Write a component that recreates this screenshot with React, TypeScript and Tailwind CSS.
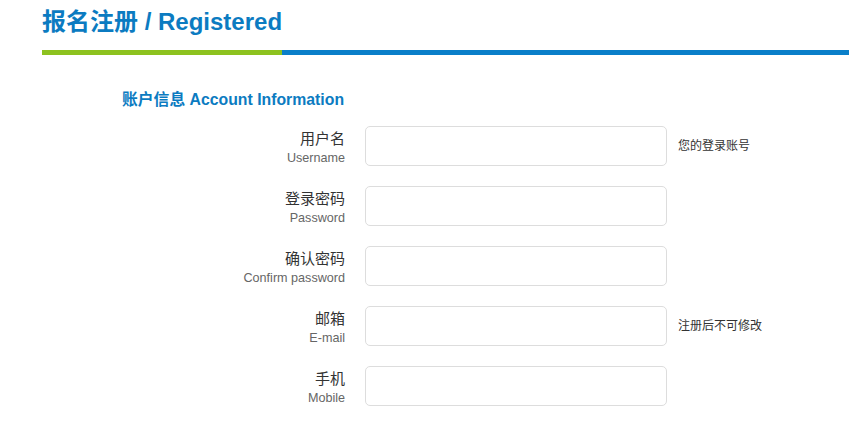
import React from 'react';

const font = { fontFamily: '"Liberation Sans", "Noto Sans CJK SC", sans-serif' };

type Field = { cn: string; en: string; hint?: string; type?: string };

const fields: Field[] = [
  { cn: '用户名', en: 'Username', hint: '您的登录账号' },
  { cn: '登录密码', en: 'Password', type: 'password' },
  { cn: '确认密码', en: 'Confirm password', type: 'password' },
  { cn: '邮箱', en: 'E-mail', hint: '注册后不可修改' },
  { cn: '手机', en: 'Mobile' },
];

const App: React.FC = () => {
  return (
    <div className="min-h-screen bg-white" style={font}>
      <div className="pl-[42px]">
        <h1 className="pt-[4px] text-[24px] font-bold leading-[36px] text-[#0b7bc1]">
          报名注册 / Registered
        </h1>
        <div className="mt-[10px] flex h-[5px]">
          <div className="w-[240px] bg-[#8dc21f]" />
          <div className="flex-1 bg-[#0a7fc9]" />
        </div>
      </div>

      <div className="mt-[35px]">
        <h2 className="pl-[122px] text-[15.8px] font-bold leading-[20px] text-[#0b7bc1]">
          账户信息 Account Information
        </h2>
        <div className="mt-[16px] flex flex-col gap-[20px]">
          {fields.map((f) => (
            <div key={f.en} className="flex items-center">
              <div className="w-[345px] self-start pt-[3px] text-right">
                <div className="text-[15px] leading-[20px] text-[#333]">{f.cn}</div>
                <div className="mt-[1px] text-[12.6px] leading-[16px] text-[#666]">{f.en}</div>
              </div>
              <input
                type={f.type ?? 'text'}
                className="ml-[20px] h-[40px] w-[302px] rounded-[5px] border border-[#ddd] bg-white px-2 outline-none"
              />
              {f.hint && (
                <span className="ml-[11px] text-[12px] text-[#333]">{f.hint}</span>
              )}
            </div>
          ))}
        </div>
      </div>
    </div>
  );
};

export default App;
